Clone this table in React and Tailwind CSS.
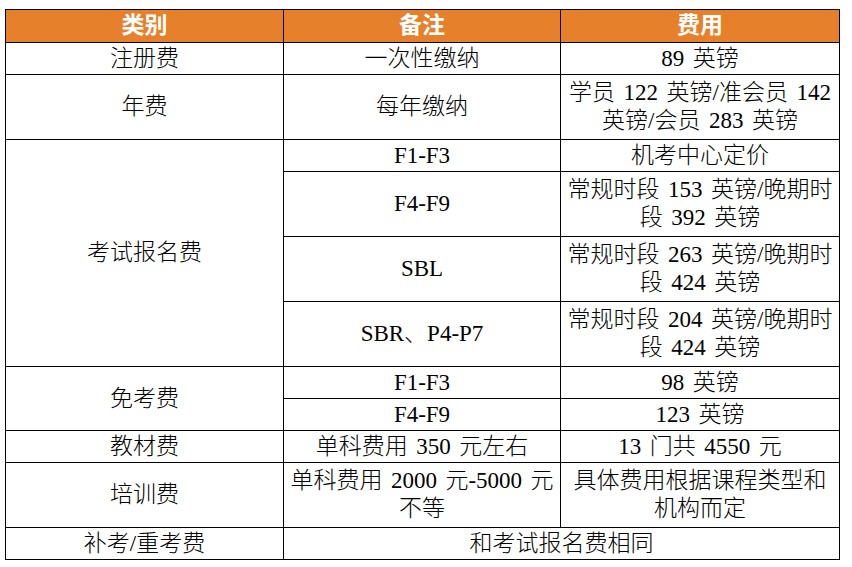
const rows = [
  { cat: "注册费", note: "一次性缴纳", fee: ["89 英镑"] },
  { cat: "年费", note: "每年缴纳", fee: ["学员 122 英镑/准会员 142", "英镑/会员 283 英镑"] },
  { cat: "考试报名费", span: 4, note: "F1-F3", fee: ["机考中心定价"] },
  { note: "F4-F9", fee: ["常规时段 153 英镑/晚期时", "段 392 英镑"] },
  { note: "SBL", fee: ["常规时段 263 英镑/晚期时", "段 424 英镑"] },
  { note: "SBR、P4-P7", fee: ["常规时段 204 英镑/晚期时", "段 424 英镑"] },
  { cat: "免考费", span: 2, note: "F1-F3", fee: ["98 英镑"] },
  { note: "F4-F9", fee: ["123 英镑"] },
  { cat: "教材费", note: "单科费用 350 元左右", fee: ["13 门共 4550 元"] },
  { cat: "培训费", note: ["单科费用 2000 元-5000 元", "不等"], fee: ["具体费用根据课程类型和", "机构而定"] },
];

const Lines = ({ lines }) => {
  const list = Array.isArray(lines) ? lines : [lines];
  return list.map((l, i) => (
    <div key={i} className="whitespace-nowrap">
      {l}
    </div>
  ));
};

const cell = "border border-black text-center align-middle p-0";

export default function App() {
  return (
    <div className="bg-white w-[852px] h-[567px] pt-[9px] pl-[5px]">
      <table
        className="table-fixed border-collapse text-black text-[23px] leading-[28px] font-light [word-spacing:0.12em]"
        style={{ width: 834, fontFamily: '"Liberation Serif", "Noto Sans CJK SC", serif' }}
      >
        <colgroup>
          <col className="w-[278px]" />
          <col className="w-[277px]" />
          <col className="w-[279px]" />
        </colgroup>
        <thead>
          <tr className="h-[33px] bg-[#e6802a] text-white font-bold">
            <th className={cell}>类别</th>
            <th className={cell}>备注</th>
            <th className={cell}>费用</th>
          </tr>
        </thead>
        <tbody>
          {rows.map((r, i) => {
            const two = Array.isArray(r.fee) && r.fee.length > 1;
            return (
              <tr key={i} className={two ? "h-[65px]" : "h-[32px]"}>
                {r.cat && (
                  <td className={cell} rowSpan={r.span || 1}>
                    {r.cat}
                  </td>
                )}
                <td className={cell}>
                  <Lines lines={r.note} />
                </td>
                <td className={cell}>
                  <Lines lines={r.fee} />
                </td>
              </tr>
            );
          })}
          <tr className="h-[32px]">
            <td className={cell}>补考/重考费</td>
            <td className={cell} colSpan={2}>
              和考试报名费相同
            </td>
          </tr>
        </tbody>
      </table>
    </div>
  );
}
